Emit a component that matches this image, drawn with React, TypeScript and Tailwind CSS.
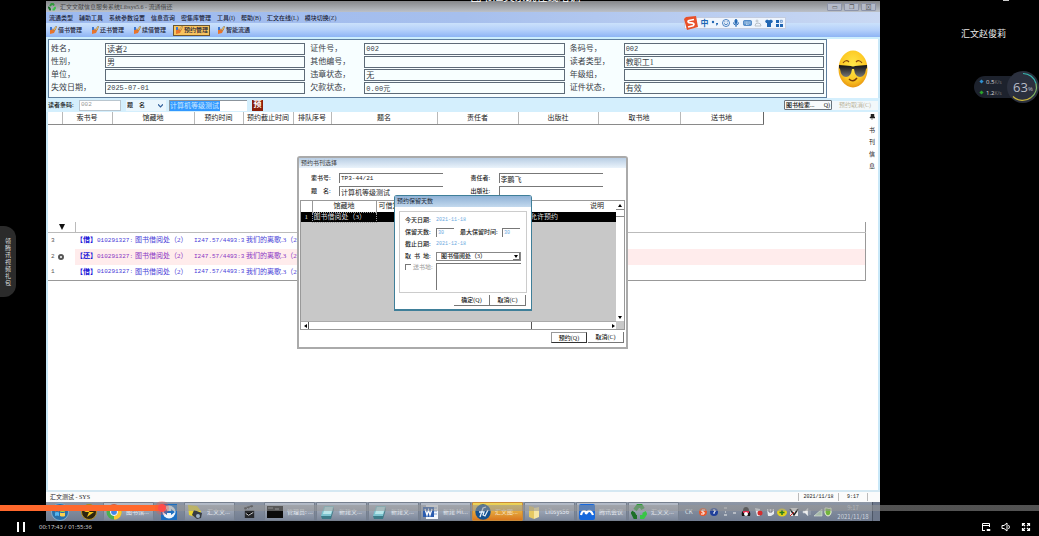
import type { ReactNode } from "react";

const menus = ["流通类型", "辅助工具", "系统参数设置", "信息查询", "密集库管理", "工具(I)", "帮助(B)", "汇文在线(L)", "模块切换(Z)"];
const tools = ["借书管理", "还书管理", "续借管理", "预约管理", "智能流通"];

const reader = [
  [
    ["姓名", "读者2"],
    ["性别", "男"],
    ["单位", ""],
    ["失效日期", "2025-07-01"],
  ],
  [
    ["证件号", "002"],
    ["其他编号", ""],
    ["违章状态", "无"],
    ["欠款状态", "0.00元"],
  ],
  [
    ["条码号", "002"],
    ["读者类型", "教职工1"],
    ["年级组", ""],
    ["证件状态", "有效"],
  ],
];

const logs = [
  { no: 3, tag: "借" },
  { no: 2, tag: "还" },
  { no: 1, tag: "借" },
];

export default function App() {
  return (
    <div className="relative flex min-h-screen flex-col overflow-hidden bg-black font-['Liberation_Serif','Noto_Sans_CJK_SC',serif] text-[8px] leading-none text-[#333]">
      <div className="grid flex-1 grid-cols-[46px_minmax(0,1fr)_159px]">
        {/* Gift tab */}
        <aside className="flex items-center pt-[2px]">
          <button className="flex h-[71px] w-4 items-center justify-center rounded-r-xl bg-[#2b2b2b] font-['Noto_Sans_CJK_SC',sans-serif] text-[6px] text-[#ddd]">
            <span className="w-[6px] leading-[7px] break-all">领腾讯视频礼包</span>
          </button>
        </aside>

        <main className="relative mt-px flex flex-col bg-white">
          <Chrome />
          <ReaderPanel />
          <QueryBar />
          <div className="flex flex-1 border-x-2 border-[#c9e8f8]">
            <div className="min-w-0 flex-1">
              <ReserveHeader />
              <LogTable />
            </div>
            <div className="flex w-[12px] flex-col items-center pt-[2px] text-[6px] text-[#222]">
              <Pin />
              <span className="mt-1 w-[6px] leading-3 break-all">书刊信息</span>
            </div>
          </div>
          <footer className="flex h-3 items-center border-t-2 border-[#d5e8f2] bg-[#fbfbfb] px-1 text-[6px] text-[#222]">
            <span className="flex-1">汇文测试 - SYS</span>
            <span className="w-10 border-l border-[#bbb] text-center font-['Liberation_Mono',monospace] text-[5px] leading-[8px]">2021/11/18</span>
            <span className="w-[30px] border-x border-[#bbb] text-center font-['Liberation_Mono',monospace] text-[5px] leading-[8px]">9:17</span>
            <span className="w-2" />
          </footer>
          <Taskbar />
          <PickDialog />
          <KeepDialog />
        </main>

        <aside className="flex flex-col items-end pt-[28px]">
          <p className="pr-[33px] font-['Noto_Sans_CJK_SC',sans-serif] text-[9px] leading-3 text-[#e8e8e8]">汇文赵俊莉</p>
          <NetWidget />
        </aside>
      </div>

      {/* Player bar */}
      <div className="flex h-[15px] items-center gap-[14px] pr-2 pb-1 pl-[17px] font-['Noto_Sans',sans-serif] text-[6px] text-[#ccc]">
        <button aria-label="暂停" className="flex gap-[4px]">
          <span className="h-[10px] w-[2px] bg-white" />
          <span className="h-[10px] w-[2px] bg-white" />
        </button>
        <span className="flex-1">00:17:43 / 01:55:36</span>
        <PlayerIcons />
      </div>
      <input
        type="range"
        aria-label="播放进度"
        max={6936}
        defaultValue={1063}
        className="absolute inset-x-0 bottom-[25px] m-0 h-[6px] w-full appearance-none bg-[linear-gradient(to_right,#ff682c_15.6%,rgba(150,150,150,0.55)_15.6%)] [&::-webkit-slider-thumb]:size-2 [&::-webkit-slider-thumb]:appearance-none [&::-webkit-slider-thumb]:rounded-full [&::-webkit-slider-thumb]:bg-[#ff4c49] [&::-webkit-slider-thumb]:shadow-[0_0_0_3px_rgba(255,80,60,0.3)]"
      />
      {/* Video title, mostly scrolled off */}
      <div className="absolute inset-x-0 top-0 flex h-[2px] items-end justify-center overflow-hidden pl-3 font-['Noto_Sans_CJK_SC',sans-serif] text-[11px] leading-[12px] text-white">
        图书汇文系统在线培训
      </div>
      <span className="absolute top-0 right-[30px] h-px w-[6px] bg-[#ccc]" />
    </div>
  );
}

function Chrome() {
  return (
    <header className="relative text-[6px] text-[#1a2238]">
      <div className="flex h-[11px] items-center gap-1 bg-linear-to-b from-[#85878a] to-[#bcc1c8] pl-[2px] text-[#444]">
        <Recycle className="size-2" />
        <span className="flex-1">汇文文献信息服务系统Libsys5.6 - 流通借还</span>
        <div className="flex gap-[2px] pr-1">
          {["▭", "❐", "⊠"].map((c) => (
            <button key={c} className="h-2 w-[15px] rounded-[1px] border border-[#8d94a8] bg-[#b4bac8] text-[6px] leading-[6px] text-[#555]">
              {c}
            </button>
          ))}
        </div>
      </div>
      <nav className="flex h-[11px] items-center gap-[6px] bg-linear-to-r from-[#9dbaf0] via-[#a6bfed] to-[#c9d8f3] pl-[3px]">
        {menus.map((m) => (
          <button key={m} className="font-medium whitespace-nowrap">
            {m}
          </button>
        ))}
      </nav>
      <div className="flex h-[14px] items-center gap-[5px] bg-linear-to-b from-[#cbe1fb] via-[#b4d0fa] to-[#8eb4f4] pl-px">
        {tools.map((t) => (
          <button
            key={t}
            className={
              t === "预约管理"
                ? "flex h-[11px] items-center gap-px border border-[#6b5730] bg-[#f8c45e] px-px font-medium"
                : "flex h-[11px] items-center gap-px border border-transparent px-px font-medium"
            }
          >
            <svg viewBox="0 0 8 8" className="size-2">
              <path d="M1 3l2-1 1 2 1-1h2L6 5 5 7 1 8z" fill="#e8742c" />
              <path d="M1 1h2v3H1z" fill="#3c76cf" />
              <path d="M4 4l3-4 1 1-3 4z" fill="#f7c65e" stroke="#6a5a48" strokeWidth=".4" />
            </svg>
            {t}
          </button>
        ))}
      </div>
      <div className="h-[2px] bg-[#cdeefd]" />
      <ImeBar />
    </header>
  );
}

function ImeBar() {
  return (
    <div className="absolute top-[16px] right-[94px] flex h-3 w-[102px] items-center justify-between border border-[#c3cce0] bg-[#eef4fd] pr-[2px] text-[#2166b3]">
      <svg viewBox="0 0 14 14" className="-ml-[1px] size-[14px]">
        <path d="M2 1l10-1 2 11-11 3-3-11z" fill="#e8502a" />
        <path d="M10 3.500L5 4.500q-2 1 0 2.200l4 .5q2 1 0 2.500L4 11" fill="none" stroke="#fff" strokeWidth="1.700" />
      </svg>
      <span className="font-['Noto_Sans_CJK_SC',sans-serif] text-[8px] font-bold">中</span>
      <svg viewBox="0 0 8 8" className="size-2" fill="currentColor">
        <circle cx="2" cy="3" r="1.200" />
        <path d="M5 4h2v1L5.500 7z" />
      </svg>
      <svg viewBox="0 0 8 8" className="size-2" fill="none" stroke="currentColor" strokeWidth=".8">
        <circle cx="4" cy="4" r="3.500" />
        <path d="M2 4.500q2 2.500 4 0M2.800 2.300v1M5.200 2.300v1" />
      </svg>
      <svg viewBox="0 0 8 8" className="size-2" fill="none" stroke="currentColor">
        <rect x="3" y=".5" width="2" height="4" rx="1" fill="currentColor" />
        <path d="M1.500 3.500q0 2.500 2.500 2.500t2.500-2.500M4 6v2" />
      </svg>
      <svg viewBox="0 0 9 8" className="h-2 w-[9px]">
        <rect x=".5" y="1.500" width="8" height="5" rx="1" fill="#5b94cf" stroke="#2166b3" strokeWidth=".6" />
        <path d="M1.500 3h6M1.500 4.200h6M3 5.500h3" stroke="#fff" strokeWidth=".6" strokeDasharray="1 .4" />
      </svg>
      <svg viewBox="0 0 8 8" className="size-2" fill="none" stroke="#b9c0c8">
        <circle cx="3" cy="2" r="1" />
        <path d="M1 7q0-3 3-3t3 3z" />
      </svg>
      <svg viewBox="0 0 8 8" className="size-2" fill="currentColor">
        <path d="M0 2l2-1.500q2 1.500 4 0L8 2 7 4H6v4H2V4H1z" />
      </svg>
      <svg viewBox="0 0 8 8" className="size-2" fill="currentColor">
        <path d="M1 1h3v3H1zM1 5h3v3H1zM5 5h3v3H5z" />
        <path d="M5.300 1.300h2v2h-2z" fill="none" stroke="currentColor" strokeWidth=".6" />
      </svg>
    </div>
  );
}

function ReaderPanel() {
  return (
    <section className="flex border-x-2 border-[#c9e8f8] bg-[#f7feff]">
      <div className="flex flex-1 gap-[5px] border border-[#5e7f9e] px-[2px] py-[3px] text-[#3a4148]">
        {reader.map((group, g) => (
          <div key={g} className="flex flex-1 flex-col gap-px">
            {group.map(([label, value]) => (
              <div key={label} className="flex h-[12px] items-center">
                <label htmlFor={label} className="w-[54px] shrink-0">
                  {label}，
                </label>
                <input
                  id={label}
                  readOnly
                  defaultValue={value}
                  className={
                    /^\d/.test(value)
                      ? "h-[12px] w-full min-w-0 border border-[#5d6b78] bg-[#f8ffff] px-px font-['Liberation_Mono','Noto_Sans_CJK_SC',monospace] text-[7px]"
                      : "h-[12px] w-full min-w-0 border border-[#5d6b78] bg-[#f8ffff] px-px pb-[2px]"
                  }
                />
              </div>
            ))}
          </div>
        ))}
      </div>
      <div className="flex w-[51px] items-center justify-center bg-white">
        <svg viewBox="0 0 30 38" className="h-[38px] w-[30px]">
          <defs>
            <radialGradient id="face" cx=".5" cy=".4" r=".6">
              <stop offset="0" stopColor="#ffe94a" />
              <stop offset=".7" stopColor="#fdc924" />
              <stop offset="1" stopColor="#e89510" />
            </radialGradient>
            <linearGradient id="lens" x1="0" y1="0" x2="0" y2="1">
              <stop offset="0" stopColor="#111" />
              <stop offset="1" stopColor="#777" />
            </linearGradient>
          </defs>
          <ellipse cx="15" cy="19" rx="14.500" ry="18.500" fill="url(#face)" />
          <path d="M5 13q3-4 6-1M18 12q3-3 6 1" fill="none" stroke="#8a4a0c" strokeWidth="1.200" />
          <path d="M1 15l12 1q2 1 4 0l12-1v3l-1 1q-1 8-6 8-5 0-6-8h-2q-1 8-6 8-5 0-6-8l-1-1z" fill="url(#lens)" />
          <path d="M11 29q4 4 8-1" fill="none" stroke="#7a3d08" strokeWidth="1.500" />
        </svg>
      </div>
    </section>
  );
}

function QueryBar() {
  return (
    <form className="flex h-[14px] items-center bg-[#d4effd] px-[2px] text-[6px] text-[#111]">
      <label htmlFor="barcode" className="w-[31px] font-medium">
        读者条码:
      </label>
      <input
        id="barcode"
        defaultValue="002"
        className="h-[11px] w-[42px] border border-[#b9c6cf] bg-white px-px pb-[2px] font-['Liberation_Mono',monospace] text-[#999]"
      />
      <div className="relative ml-[5px] w-10">
        <select aria-label="检索项" className="h-[11px] w-full appearance-none bg-[#eaf6fd] px-px font-medium">
          <option>题　名</option>
        </select>
        <svg viewBox="0 0 6 4" className="pointer-events-none absolute top-1 right-[3px] h-1 w-[5px]">
          <path d="M0 0l3 3 3-3" fill="none" stroke="#35629b" strokeWidth="1.500" />
        </svg>
      </div>
      <input
        aria-label="检索内容"
        defaultValue="计算机等级测试"
        className="ml-[3px] h-[11px] w-[78px] border-t border-l border-[#8b949c] bg-linear-to-r from-[#3399ff] from-65% to-white to-65% pb-px text-[7px] text-[#cde8ff]"
      />
      <button type="button" className="ml-[5px] size-[11px] bg-[#8c1f0a] text-[8px] font-bold text-white">
        预
      </button>
      <span className="flex-1" />
      <button type="button" className="flex h-[10px] w-12 items-center justify-between rounded-[1px] border border-[#69737c] bg-[#f7fafc] px-px font-medium">
        <span>图书检索...</span>
        <span>Q)</span>
      </button>
      <button type="button" disabled className="h-[9px] w-[46px] bg-[#f3f8fa] text-[#bbb69f]">
        预约取消(C)
      </button>
    </form>
  );
}

function ReserveHeader() {
  return (
    <table className="w-[715px] table-fixed border-collapse text-[7px] text-[#222]">
      <colgroup>
        <col className="w-[14px]" />
        <col className="w-[50px]" />
        <col className="w-[82px]" />
        <col className="w-[49px]" />
        <col className="w-[50px]" />
        <col className="w-[38px]" />
        <col className="w-[106px]" />
        <col className="w-[81px]" />
        <col className="w-[80px]" />
        <col className="w-[82px]" />
        <col className="w-[83px]" />
      </colgroup>
      <thead>
        <tr className="h-[12px]">
          {["", "索书号", "馆藏地", "预约时间", "预约截止时间", "排队序号", "题名", "责任者", "出版社", "取书地", "送书地"].map((h) => (
            <th key={h} className="border-r border-b border-r-[#b9b9b9] border-b-[#8a8a8a] p-0 pt-px font-normal whitespace-nowrap last:border-r-[#666]">
              {h}
            </th>
          ))}
        </tr>
      </thead>
    </table>
  );
}

function LogTable() {
  return (
    <table className="mt-[97px] w-full table-fixed border-collapse border-r border-b border-[#999] text-[7px] text-[#4a40d8]">
      <colgroup>
        <col className="w-[9px]" />
        <col className="w-[18px]" />
        <col />
      </colgroup>
      <thead>
        <tr className="h-[11px] border-b border-[#bbb]">
          <th />
          <th className="border-r border-[#bbb] p-0">
            <svg viewBox="0 0 8 8" className="mr-auto ml-[1px] size-2">
              <path d="M1 1h6L4 7z" fill="#111" />
            </svg>
          </th>
          <th />
        </tr>
      </thead>
      <tbody>
        {logs.map((l) => (
          <tr key={l.no} className="h-4 even:text-[#8a35c4]">
            <td className="p-0 pl-[3px] font-['Liberation_Mono',monospace] text-[6px] text-[#555]">{l.no}</td>
            <td className="p-0">
              {l.no === 2 && <span className="ml-px block size-[6px] rounded-full border-2 border-[#555]" />}
            </td>
            <td className={l.no === 2 ? "bg-[#ffecec] p-0" : "p-0"}>
              <div className="flex items-center whitespace-nowrap">
                <b className="w-[22px] pl-px text-[#1a14d8]">【{l.tag}】</b>
                <span className="w-[38px] font-['Liberation_Mono',monospace] text-[6px]">010291327:</span>
                <span className="w-[59px]">图书借阅处（2）</span>
                <span className="w-[52px] font-['Liberation_Mono',monospace] text-[6px]">I247.57/4493:3</span>
                <span>我们的离歌.3（2）</span>
              </div>
            </td>
          </tr>
        ))}
      </tbody>
    </table>
  );
}

function Field({ id, label, value }: { id: string; label: string; value: string }) {
  return (
    <div className="flex items-center">
      <label htmlFor={id} className="w-[28px] text-[6px] font-medium whitespace-pre">
        {label}
      </label>
      <input
        id={id}
        defaultValue={value}
        className={
          /^[A-Z]/.test(value)
            ? "h-[10px] w-[104px] border-t border-l border-[#777] bg-white px-px font-['Liberation_Mono',monospace] text-[6px]"
            : "h-[10px] w-[104px] border-t border-l border-[#777] bg-white px-px text-[7px]"
        }
      />
    </div>
  );
}

function DialogButton({ children }: { children: ReactNode }) {
  return (
    <button className="h-[11px] w-9 border-r border-b border-[#777] bg-white text-[6px] font-medium text-[#111]">
      {children}
    </button>
  );
}

function Arrow({ dir }: { dir: "up" | "down" | "left" | "right" }) {
  const d = { up: "M0 4l2-3 2 3z", down: "M0 1l2 3 2-3z", left: "M4 0v4L1 2z", right: "M1 0v4l3-2z" }[dir];
  return (
    <svg viewBox="0 0 4 4" className="mx-auto size-1">
      <path d={d} fill="#000" />
    </svg>
  );
}

function PickDialog() {
  return (
    <section className="absolute top-[155px] left-[251px] flex h-[193px] w-[331px] flex-col rounded-t-[3px] border-2 border-[#aaa] bg-white text-[#222]">
      <h2 className="h-[10px] bg-linear-to-b from-[#b9cee4] to-[#eaf3fb] pl-[2px] text-[6px] leading-[10px] text-[#444]">预约书刊选择</h2>
      <div className="grid grid-cols-2 gap-x-[4px] gap-y-[3px] pt-[5px] pl-[12px]">
        <Field id="callno" label="索书号:" value="TP3-44/21" />
        <Field id="author" label="责任者:" value="李鹏飞" />
        <Field id="title" label="题　名:" value="计算机等级测试" />
        <Field id="press" label="出版社:" value="" />
      </div>
      <div className="mx-px mt-[4px] flex flex-1 border border-[#999] bg-[#c8c8c8]">
        <div className="flex flex-1 flex-col">
          <table className="w-full table-fixed border-collapse text-[7px]">
            <colgroup>
              <col className="w-[11px]" />
              <col className="w-[64px]" />
              <col className="w-[90px]" />
              <col className="w-[64px]" />
              <col />
            </colgroup>
            <thead>
              <tr className="h-[11px] bg-white">
                <th className="border-r border-[#999]" />
                <th className="border-r border-[#999] p-0 font-normal">馆藏地</th>
                <th className="p-0 pl-[2px] text-left font-normal">可借复本</th>
                <th />
                <th className="p-0 pr-[12px] text-right font-normal">说明</th>
              </tr>
            </thead>
            <tbody>
              <tr className="h-[10px] bg-black text-[#ddd]">
                <td className="p-0 text-center">1</td>
                <td className="border border-dotted border-[#999] p-0 pl-px whitespace-nowrap">图书借阅处（3）</td>
                <td />
                <td />
                <td className="p-0">允许预约</td>
              </tr>
            </tbody>
          </table>
          <span className="flex-1" />
          <div className="flex h-2 items-center border-t border-[#aaa] bg-white">
            <button aria-label="向左" className="w-[7px]">
              <Arrow dir="left" />
            </button>
            <span className="h-full w-56 border-x border-[#555]" />
            <span className="flex-1" />
            <button aria-label="向右" className="w-[7px]">
              <Arrow dir="right" />
            </button>
          </div>
        </div>
        <div className="flex w-2 flex-col bg-white">
          <button aria-label="向上" className="h-2">
            <Arrow dir="up" />
          </button>
          <span className="h-2 border-y border-[#888]" />
          <span className="flex-1" />
          <button aria-label="向下" className="h-2">
            <Arrow dir="down" />
          </button>
          <span className="h-2 bg-[#c8c8c8]" />
        </div>
      </div>
      <div className="flex justify-end gap-px px-[2px] pt-[2px] pb-[4px]">
        <button className="h-[11px] w-9 border border-r-[#333] border-b-[#333] border-[#999] bg-white text-[6px] font-medium text-[#111]">
          预约(Q)
        </button>
        <DialogButton>取消(C)</DialogButton>
      </div>
    </section>
  );
}

function KeepDialog() {
  return (
    <section className="absolute top-[194px] left-[348px] w-[138px] rounded-t-[3px] border border-b-2 border-[#3f7f99] bg-white text-[6px] text-[#222]">
      <h2 className="h-[11px] bg-linear-to-b from-[#8fb2d6] to-[#c3d9ee] pl-[2px] text-[6px] leading-[11px] text-[#1c2a3a]">预约保留天数</h2>
      <div className="mx-1 mt-[4px] flex h-[82px] flex-col gap-[2px] border border-[#ccc] px-[5px] pt-[3px] font-medium">
        <div className="flex h-[10px] items-center">
          <span className="w-[31px]">今天日期:</span>
          <span className="font-['Liberation_Mono',monospace] text-[5px] text-[#6aa9e0]">2021-11-18</span>
        </div>
        <div className="flex h-[10px] items-center">
          <label htmlFor="days" className="w-[31px]">
            保留天数:
          </label>
          <input
            id="days"
            defaultValue="30"
            className="h-[9px] w-[18px] border-t border-l border-[#777] px-px font-['Liberation_Mono',monospace] text-[5px] text-[#6aa9e0]"
          />
          <label htmlFor="maxdays" className="w-[48px] pl-[6px] whitespace-nowrap">
            最大保留时间:
          </label>
          <input
            id="maxdays"
            defaultValue="30"
            className="h-[9px] w-[18px] border-t border-l border-[#777] px-px font-['Liberation_Mono',monospace] text-[5px] text-[#6aa9e0]"
          />
        </div>
        <div className="flex h-[10px] items-center">
          <span className="w-[31px]">截止日期:</span>
          <span className="font-['Liberation_Mono',monospace] text-[5px] text-[#6aa9e0]">2021-12-18</span>
        </div>
        <div className="flex h-[10px] items-center">
          <label htmlFor="place" className="w-[31px] whitespace-pre">
            取  书  地:
          </label>
          <div className="relative flex-1">
            <select id="place" className="h-[9px] w-full appearance-none border border-[#888] bg-white pl-1 text-[6px]">
              <option>图书借阅处（3）</option>
            </select>
            <span className="pointer-events-none absolute top-px right-px flex h-[7px] w-[7px] items-center border-r border-b border-[#777] bg-white">
              <Arrow dir="down" />
            </span>
          </div>
        </div>
        <div className="flex">
          <label htmlFor="deliver" className="flex h-2 w-[31px] items-center gap-[2px] font-normal whitespace-nowrap text-[#999]">
            <input id="deliver" type="checkbox" disabled className="size-[6px] appearance-none border-t border-l border-[#777]" />
            送书地:
          </label>
          <textarea aria-label="送书地" className="h-[27px] w-[85px] resize-none border-t border-l border-[#777]" />
        </div>
      </div>
      <div className="flex justify-end px-[5px] pt-[2px] pb-[3px]">
        <DialogButton>确定(Q)</DialogButton>
        <DialogButton>取消(C)</DialogButton>
      </div>
    </section>
  );
}

function Task({ icon, text, active }: { icon: ReactNode; text: string; active?: boolean }) {
  return (
    <button
      className={
        active
          ? "flex h-[19px] w-[51px] items-center gap-1 overflow-hidden rounded-[1px] border border-[#c98a3a] bg-linear-to-b from-[#ecd85a] to-[#d9781e] pl-[2px] whitespace-nowrap text-[#f5e3c8]"
          : "flex h-[19px] w-[51px] items-center gap-1 overflow-hidden rounded-[1px] border border-[#76808f] bg-linear-to-b from-[#b6bdc9] to-[#7d889b] pl-[2px] whitespace-nowrap text-[#e4e8ee]"
      }
    >
      {icon}
      {text}
    </button>
  );
}

function Recycle({ className }: { className: string }) {
  return (
    <svg viewBox="0 0 16 16" className={className} fill="none" strokeWidth="4">
      <path d="M4 6l3-4h3l2 3" stroke="#2f9a3a" />
      <path d="M13 8l1 2-2 3H9" stroke="#38c546" />
      <path d="M6 13H4L2 9l1-1" stroke="#1d6f28" />
    </svg>
  );
}

function Note() {
  return (
    <svg viewBox="0 0 16 16" className="size-4 shrink-0">
      <path d="M5 2h10l-3 10H2z" fill="#7cc3cf" />
      <path d="M6 3h8l-2 7H4z" fill="#b9e6ea" />
      <path d="M2 12l10 0 3-9v2l-3 10H3z" fill="#3c7b88" />
    </svg>
  );
}

function Taskbar() {
  return (
    <div className="flex h-[19px] items-center bg-linear-to-b from-[#8e97a6] to-[#717c90] pl-[5px] font-['Noto_Sans_CJK_SC',sans-serif] text-[6px]">
      <button aria-label="开始" className="mr-[12px]">
        <svg viewBox="0 0 18 18" className="size-[18px]">
          <circle cx="9" cy="9" r="8.500" fill="#286fa8" stroke="#8fc3e6" strokeWidth=".7" />
          <path d="M4 5q2-1 4 0v3.500q-2-1-4 0z" fill="#f0703c" />
          <path d="M9 5q2 1 5 0v3.500q-2 1-5 0z" fill="#9ccb48" />
          <path d="M4 9.500q2-1 4 0V13q-2-1-4 0z" fill="#55b5ee" />
          <path d="M9 9.500q2 1 5 0V13q-2 1-5 0z" fill="#fbd04e" />
        </svg>
      </button>
      <svg viewBox="0 0 16 16" className="mr-[6px] size-4">
        <circle cx="8" cy="8" r="7.500" fill="#2b2410" stroke="#b58f1e" />
        <path d="M3 8l7-4-2 4h5l-7 5 2-5z" fill="#f0c419" />
      </svg>
      <Task
        text="图书馆..."
        icon={
          <svg viewBox="0 0 16 16" className="size-4 shrink-0">
            <circle cx="8" cy="8" r="7.500" fill="#4caf50" />
            <path d="M8 8L1.500 4A7.500 7.500 0 0115 5z" fill="#e2453a" />
            <path d="M8 8l7-3a7.500 7.500 0 01-7 10.500z" fill="#fbc62f" />
            <circle cx="8" cy="8" r="3.500" fill="#4285e8" stroke="#fff" />
          </svg>
        }
      />
      <svg viewBox="0 0 16 16" className="mx-[7px] size-4">
        <rect width="16" height="16" fill="#1b6fc2" />
        <circle cx="8" cy="8" r="6.500" fill="#eef5fb" />
        <path d="M2 8l4-3v2h4V5l4 3-4 3V9H6v2z" fill="#1b6fc2" />
      </svg>
      <Task
        text="汇文文..."
        icon={
          <svg viewBox="0 0 16 16" className="size-4 shrink-0">
            <path d="M1 1l9 1 4 5-2 7-10-3z" fill="#e9d62f" />
            <path d="M7 6l8 3-1 5-4 1-5-4z" fill="#363c44" />
            <circle cx="11" cy="12" r="2" fill="#9fb4c8" />
          </svg>
        }
      />
      <svg viewBox="0 0 16 16" className="mx-[7px] size-[15px]">
        <path d="M3 7h10v8H3zM2 4l9-3 1 2-9 3z" fill="#26282c" />
        <path d="M4 10l3 2 5-3M5 4l1 1M8 3l1 1" stroke="#d5d8dc" />
      </svg>
      <div className="flex gap-px">
        <Task
          text="管理员: ..."
          icon={
            <svg viewBox="0 0 16 12" className="h-3 w-4 shrink-0">
              <rect width="16" height="12" fill="#0a0a0a" />
              <path d="M1 2h5M8 3h4" stroke="#aaa" strokeWidth=".8" />
            </svg>
          }
        />
        <Task text="新建文..." icon={<Note />} />
        <Task text="新建文..." icon={<Note />} />
        <Task
          text="新建 Mi..."
          icon={
            <svg viewBox="0 0 16 16" className="size-4 shrink-0">
              <path d="M3 1h12v14H3z" fill="#f4f8fc" />
              <path d="M9 4h5M10 7h4M10 10h4" stroke="#7fa3d4" />
              <path d="M0 3h11v10H0z" fill="#2a5caf" />
              <path d="M2 5l2 6 1.500-5L7 11l2-6" fill="none" stroke="#fff" strokeWidth="1.300" />
            </svg>
          }
        />
        <Task
          active
          text="汇文图..."
          icon={
            <svg viewBox="0 0 16 16" className="size-4 shrink-0">
              <circle cx="8" cy="8" r="7.700" fill="#14508e" />
              <path d="M5 13l3-9 3-1M4 8h5l-1 3 2 1 3-6" fill="none" stroke="#e6f0fa" strokeWidth="1.300" />
            </svg>
          }
        />
        <Task
          text="Libsys56"
          icon={
            <svg viewBox="0 0 12 16" className="h-4 w-[14px] shrink-0">
              <path d="M1 2l5 1v12l-5-2z" fill="#e5c862" />
              <path d="M6 4l5-1v10l-5 2z" fill="#f6e6a4" />
            </svg>
          }
        />
        <Task
          text="腾讯会议"
          icon={
            <svg viewBox="0 0 16 16" className="size-4 shrink-0">
              <rect width="16" height="16" rx="2" fill="#1668dc" />
              <path d="M2 11q1-4 3-4t2 3q2-4 4-3t3 4" fill="none" stroke="#fff" strokeWidth="2.200" />
            </svg>
          }
        />
        <Task text="汇文文..." icon={<Recycle className="size-4 shrink-0" />} />
      </div>
      <Tray />
      <div className="mr-[2px] w-[34px] shrink-0 text-center leading-[9px] text-[#d0d6df]">
        <div>9:17</div>
        <div>2021/11/18</div>
      </div>
      <button aria-label="显示桌面" className="h-full w-2 shrink-0 border-l border-[#4d5666] bg-[#6d778a]" />
    </div>
  );
}

function Tray() {
  return (
    <div className="flex flex-1 items-center justify-between pr-1 pl-[6px] text-[#dfe4ea]">
      <span>CK</span>
      <svg viewBox="0 0 134 10" className="h-[10px] w-[134px]">
        <circle cx="5" cy="5" r="4" fill="#e8582c" />
        <path d="M7 3H4v2h2v2H3" fill="none" stroke="#fff" />
        <circle cx="16" cy="5" r="4" fill="#1f3f9a" />
        <path d="M15 3h2v2h-1v2" fill="none" stroke="#fff" />
        <path d="M26 1h3M27 5h1M26 8h3M35 6h3" stroke="#eee" />
        <path d="M44 9q-1-4 1-5 0-4 3-4t3 4q2 1 1 5z" fill="#161616" />
        <path d="M45 4h6v2h-6z" fill="#dd2a4c" />
        <circle cx="48" cy="7" r="2" fill="#fff" />
        <path d="M57 1l5 1v7h-3z" fill="#e3e6ea" />
        <circle cx="62" cy="6" r="2.500" fill="#d52d2d" />
        <path d="M69 2h7v5l-3 2h-3z" fill="#e6e9ed" />
        <path d="M71 2v3h3V2" fill="none" stroke="#667" />
        <ellipse cx="84" cy="5.500" rx="5" ry="4" fill="#e4d21c" />
        <path d="M84 3v5M81.500 5.500h5" stroke="#247a22" strokeWidth="1.500" />
        <path d="M92 1h8v8h-8z" fill="#e8e8e8" />
        <path d="M92 2l4 6 4-6" fill="none" stroke="#222" strokeWidth="1.500" />
        <path d="M92 9l4-4" stroke="#c22" />
        <path d="M105 4h2l3-3v8l-3-3h-2zM112 3v5" fill="#eee" stroke="#bcc4cf" strokeWidth=".6" />
        <path d="M116 9l8-7v7z" fill="#a7bba9" stroke="#dde4df" strokeWidth=".6" />
        <path d="M129 1q2 1 4 0v5q-1 3-3 3t-3-3V1z" fill="#72b43c" stroke="#eef4d8" />
      </svg>
    </div>
  );
}

function Pin() {
  return (
    <svg viewBox="0 0 6 6" className="size-[6px]">
      <path d="M2 0h3v3h1v1H1V3h1zM3 4v2" fill="#222" stroke="#222" strokeWidth=".5" />
    </svg>
  );
}

function NetWidget() {
  return (
    <div className="mt-[31px] flex items-center font-['Open_Sans',sans-serif] text-[6px] text-[#ddd]">
      <div className="-mr-1 flex h-[22px] w-[37px] flex-col justify-around rounded-l-full bg-[#1d222d] pl-[6px]">
        <span className="flex items-center gap-[3px]">
          <i className="size-[3px] rotate-45 bg-[#2e8fd0]" />
          <span>
            0.5<small className="text-[5px] text-[#777]">K/s</small>
          </span>
        </span>
        <span className="flex items-center gap-[3px]">
          <i className="size-[3px] rotate-45 bg-[#2aa52a]" />
          <span>
            1.2<small className="text-[5px] text-[#777]">K/s</small>
          </span>
        </span>
      </div>
      <div className="relative flex size-8 items-center justify-center rounded-full bg-[#2b303e] text-[13px] text-[#b9bdc6]">
        <svg viewBox="0 0 32 32" className="absolute inset-0 size-8" fill="none" strokeWidth="1.200">
          <path d="M16 2.500a13.500 13.500 0 0113 10" stroke="#38b8b0" />
          <path d="M29 12.500a13.500 13.500 0 01-5 14" stroke="#7fb565" />
          <path d="M24 26.500a13.500 13.500 0 01-18-1" stroke="#c9b53c" />
        </svg>
        63<span className="pt-1 text-[6px]">%</span>
      </div>
    </div>
  );
}

function PlayerIcons() {
  return (
    <div className="flex gap-[10px] text-white">
      <button aria-label="画中画">
        <svg viewBox="0 0 10 10" className="size-[10px]" fill="none" stroke="currentColor">
          <path d="M1.500 8.500v-7h7V5M1.500 3.500h7M1 8.500h3M6 7.500h3v1H6z" />
        </svg>
      </button>
      <button aria-label="音量">
        <svg viewBox="0 0 10 10" className="size-[10px]" fill="none" stroke="currentColor">
          <path d="M1 3.500h2l3-2.500v8L3 6.500H1zM7.500 3q2 2 0 4" />
        </svg>
      </button>
      <button aria-label="全屏">
        <svg viewBox="0 0 10 10" className="size-[10px]" fill="none" stroke="currentColor" strokeWidth="1.200">
          <path d="M1.500 4V1.500H4M6 1.500h2.500V4M8.500 6v2.500H6M4 8.500H1.500V6M1.500 1.500l2.500 2.500M8.500 1.500L6 4M8.500 8.500L6 6M1.500 8.500L4 6" />
        </svg>
      </button>
    </div>
  );
}
